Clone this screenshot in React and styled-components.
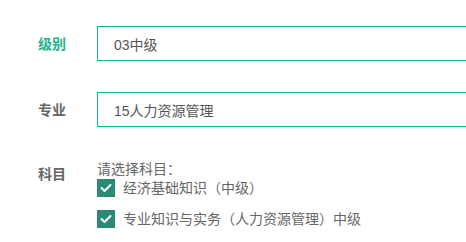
import React from 'react';
import styled, { createGlobalStyle } from 'styled-components';

const GlobalStyle = createGlobalStyle`
  body {
    margin: 0;
    background: #fff;
    overflow: hidden;
    font-family: "Liberation Sans", "Noto Sans CJK SC", sans-serif;
  }
`;

const Form = styled.div`
  padding-top: 26px;
  width: 466px;
  overflow: hidden;
`;

const Row = styled.div`
  display: flex;
  align-items: ${(p) => (p.top ? 'flex-start' : 'center')};
  margin-bottom: ${(p) => p.gap || 0}px;
`;

const Label = styled.div`
  width: 59px;
  padding-left: 38px;
  flex-shrink: 0;
  font-size: 14px;
  font-weight: bold;
  line-height: 20px;
  color: ${(p) => (p.active ? '#1fb48e' : '#666')};
  margin-top: ${(p) => p.offset || 0}px;
`;

const Field = styled.div`
  box-sizing: border-box;
  width: 420px;
  flex-shrink: 0;
  height: 35px;
  border: 1px solid #1ab394;
  padding-left: 16px;
  display: flex;
  align-items: center;
  font-size: 14px;
  color: #555;
`;

const Choices = styled.div`
  display: flex;
  flex-direction: column;
  font-size: 14px;
  color: #666;
`;

const Prompt = styled.div`
  line-height: 18px;
  margin-bottom: 1px;
`;

const Check = styled.label`
  display: flex;
  align-items: center;
  gap: 8px;
  height: 18px;
  margin-top: ${(p) => p.spacing || 0}px;
  line-height: 18px;
`;

const Box = styled.span`
  width: 18px;
  height: 18px;
  background: #2a8a74;
  display: flex;
  align-items: center;
  justify-content: center;
  flex-shrink: 0;
`;

const Tick = () => (
  <Box>
    <svg width="12" height="10" viewBox="0 0 12 10">
      <path d="M1.5 5 L4.5 8 L10.5 2" fill="none" stroke="#fff" strokeWidth="2" strokeLinecap="round" strokeLinejoin="round" />
    </svg>
  </Box>
);

export default function App() {
  return (
    <Form>
      <GlobalStyle />
      <Row gap={31}>
        <Label active>级别</Label>
        <Field>03中级</Field>
      </Row>
      <Row gap={33}>
        <Label>专业</Label>
        <Field>15人力资源管理</Field>
      </Row>
      <Row top>
        <Label offset={4}>科目</Label>
        <Choices>
          <Prompt>请选择科目：</Prompt>
          <Check>
            <Tick />
            经济基础知识（中级）
          </Check>
          <Check spacing={13}>
            <Tick />
            专业知识与实务（人力资源管理）中级
          </Check>
        </Choices>
      </Row>
    </Form>
  );
}
